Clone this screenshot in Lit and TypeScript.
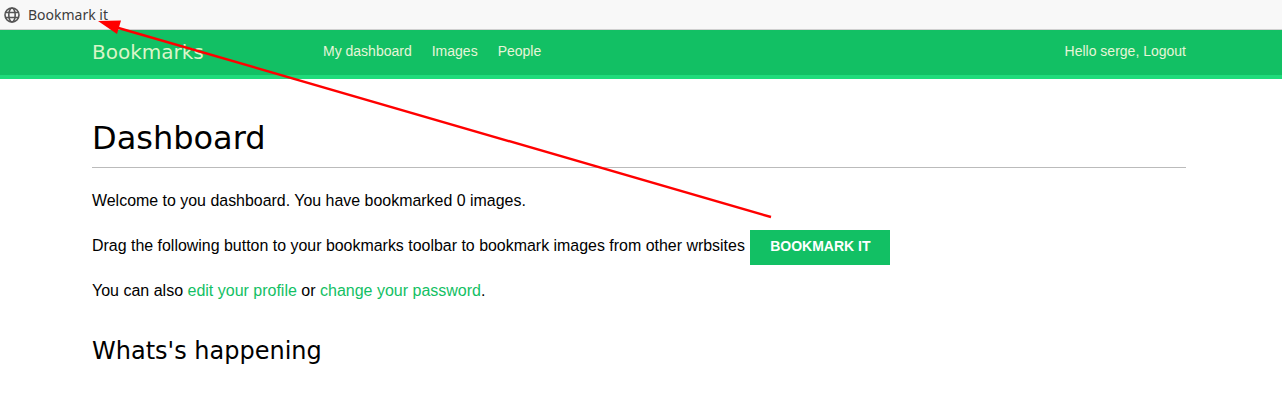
import { LitElement, html, css, svg } from "lit";
import { customElement } from "lit/decorators.js";

@customElement("app-root")
export class AppRoot extends LitElement {
  static styles = css`
    :host { display: block; position: relative; height: 405px; overflow: hidden; background: #fff; font-family: "Liberation Sans", Arial, sans-serif; font-size: 15.95px; color: #000; }
    .toolbar { height: 30px; box-sizing: border-box; background: #f8f8f8; border-bottom: 1px solid #d0d0d0; display: flex; align-items: center; padding-left: 4px; gap: 8px; font-family: "Noto Sans", sans-serif; font-size: 14px; color: #3d3d3d; }
    .toolbar svg { display: block; }
    header { height: 49px; box-sizing: border-box; background: #12c064; border-bottom: 4px solid #1fdb7b; display: flex; align-items: flex-start; padding: 0 96px 0 92px; color: #e6f5d8; font-size: 14px; }
    .logo { font-family: "DejaVu Sans", sans-serif; font-size: 20px; width: 231px; padding-top: 10px; line-height: 24px; color: #d9f5c8; }
    nav { display: flex; gap: 20px; padding-top: 12px; line-height: 18px; }
    .user { margin-left: auto; padding-top: 12px; line-height: 18px; }
    main { padding: 0 96px 0 92px; }
    h1 { margin: 0; padding: 39px 0 9px; font: 400 32px/40px "DejaVu Sans", sans-serif; border-bottom: 1px solid #bbb; }
    p { margin: 0; line-height: 20px; }
    .p1 { margin-top: 23px; }
    .p2 { margin-top: 19px; display: flex; align-items: flex-start; height: 35px; white-space: pre; line-height: 31px; }
    .btn { display: inline-block; margin-left: 1px; width: 140px; height: 35px; line-height: 33px; background: #12c064; color: #fff; font-weight: 700; font-size: 14px; text-align: center; }
    .p3 { margin-top: 16px; font-size: 16px; }
    a { color: #12c064; text-decoration: none; }
    h2 { margin: 0; padding-top: 32px; font: 400 24px/36px "DejaVu Sans", sans-serif; }
    .arrow { position: absolute; left: 0; top: 0; pointer-events: none; }
  `;

  render() {
    return html`
      <div class="toolbar">
        <svg width="16" height="16" viewBox="0 0 16 16" fill="none" stroke="#555" stroke-width="1.6">
          <circle cx="8" cy="8" r="7"></circle>
          <ellipse cx="8" cy="8" rx="3.2" ry="7"></ellipse>
          <path d="M1.5 5.5h13M1.5 10.5h13"></path>
        </svg>
        <span>Bookmark it</span>
      </div>
      <header>
        <div class="logo">Bookmarks</div>
        <nav><span>My dashboard</span><span>Images</span><span>People</span></nav>
        <div class="user">Hello serge, Logout</div>
      </header>
      <main>
        <h1>Dashboard</h1>
        <p class="p1">Welcome to you dashboard. You have bookmarked 0 images.</p>
        <p class="p2">Drag the following button to your bookmarks toolbar to bookmark images from other wrbsites <span class="btn">BOOKMARK IT</span></p>
        <p class="p3">You can also <a href="#">edit your profile</a> or <a href="#">change your password</a>.</p>
        <h2>Whats's happening</h2>
      </main>
      <svg class="arrow" width="1282" height="405">
        ${svg`<line x1="771" y1="217" x2="115" y2="27" stroke="#f00" stroke-width="2.4"></line>
        <polygon points="98,21 121,20.5 117,34" fill="#f00"></polygon>`}
      </svg>
    `;
  }
}
